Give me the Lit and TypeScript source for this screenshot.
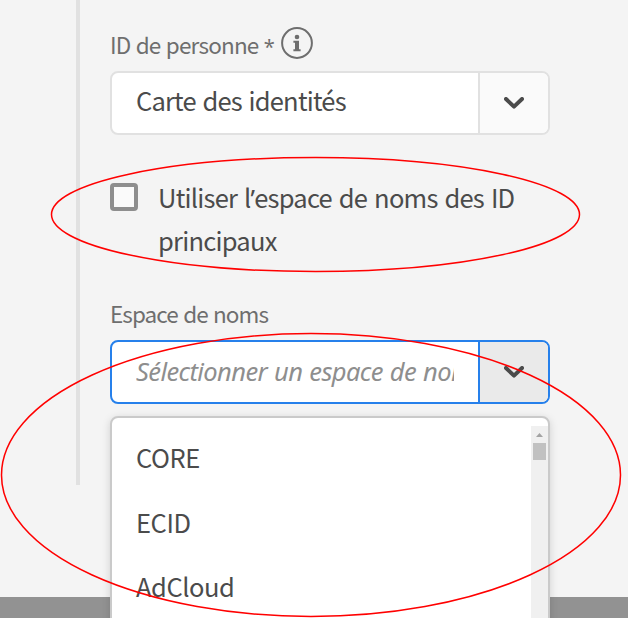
import { LitElement, html, css } from "lit";
import { customElement, property } from "lit/decorators.js";

const namespaces = ["CORE", "ECID", "AdCloud"];

@customElement("select-field")
class SelectField extends LitElement {
  @property() value = "";
  @property() placeholder = "";
  @property({ type: Boolean, reflect: true }) open = false;

  static styles = css`
    :host {
      display: flex;
      box-sizing: border-box;
      width: 440px;
      height: 64px;
      border: 2px solid #e1e1e1;
      border-radius: 8px;
      background: #fff;
      overflow: hidden;
    }
    .field {
      flex: 1;
      min-width: 0;
      padding: 0 24px;
      line-height: 54px;
      font-size: 25.5px;
      letter-spacing: -0.8px;
      word-spacing: 1.7px;
      color: #4b4b4b;
    }
    .text {
      display: block;
      overflow: hidden;
      white-space: nowrap;
    }
    .hint {
      font-family: "Noto Sans", sans-serif;
      font-style: italic;
      line-height: 58px;
      letter-spacing: -0.6px;
      word-spacing: 0.9px;
      color: #8e8e8e;
    }
    .toggle {
      box-sizing: border-box;
      width: 70px;
      border-left: 2px solid #e1e1e1;
      background: #fafafa;
      display: flex;
      align-items: center;
      justify-content: center;
    }
    :host([open]),
    :host([open]) .toggle {
      border-color: #2680eb;
    }
    :host([open]) .toggle {
      background: #eaeaea;
    }
  `;

  render() {
    return html`
      <div class="field">
        ${this.value
          ? html`<span class="text">${this.value}</span>`
          : html`<span class="text hint">${this.placeholder}</span>`}
      </div>
      <div class="toggle">
        <svg width="20" height="12" viewBox="0 0 20 12">
          <path d="M2 2 10 9.6 18 2" fill="none" stroke="#4b4b4b" stroke-width="4" stroke-linecap="round" stroke-linejoin="round" />
        </svg>
      </div>
    `;
  }
}

@customElement("app-root")
class AppRoot extends LitElement {
  static styles = css`
    :host {
      display: block;
      position: relative;
      width: 628px;
      height: 618px;
      overflow: hidden;
      background: #f4f4f4;
      font-family: "Noto Sans CJK SC", "Noto Sans", sans-serif;
      color: #4b4b4b;
    }
    .page {
      display: flex;
      flex-direction: column;
      height: 618px;
    }
    .panel {
      display: flex;
      height: 597px;
      flex: none;
      padding-left: 76px;
    }
    .rule {
      width: 4px;
      height: 485px;
      background: #e1e1e1;
    }
    .footer {
      flex: 1;
      background: #929292;
    }
    .form {
      width: 440px;
      margin-left: 30px;
    }
    .label {
      display: flex;
      font-size: 22.5px;
      line-height: 30px;
      letter-spacing: -0.8px;
      word-spacing: 1px;
      color: #6e6e6e;
      white-space: nowrap;
    }
    .person {
      height: 44px;
      padding-top: 27px;
      justify-content: space-between;
      width: 203px;
    }
    .person .name {
      padding-top: 2px;
    }
    .star {
      font-family: "Noto Sans", sans-serif;
      font-size: 20px;
    }
    .check {
      display: flex;
      height: 122px;
      padding-top: 41px;
    }
    .box {
      box-sizing: border-box;
      width: 28px;
      height: 28px;
      margin-top: 7px;
      border: 4px solid #8e8e8e;
      border-radius: 4px;
      background: #fafafa;
    }
    .caption {
      margin-left: 20px;
      font-size: 25.5px;
      line-height: 42px;
      letter-spacing: -0.76px;
      word-spacing: 1.9px;
      white-space: nowrap;
    }
    .quote {
      font-family: "Noto Sans", sans-serif;
    }
    .space {
      height: 42px;
      box-sizing: border-box;
      letter-spacing: -0.93px;
      word-spacing: 1.2px;
    }
    .menu {
      position: relative;
      box-sizing: border-box;
      display: flex;
      justify-content: space-between;
      width: 440px;
      height: 240px;
      margin-top: 12px;
      border: 2px solid #cacaca;
      border-radius: 8px;
      background: #fff;
      box-shadow: 0 2px 8px rgba(0, 0, 0, 0.15);
    }
    .items {
      padding: 7px 0 0 24px;
    }
    .item {
      font-size: 25.5px;
      line-height: 64px;
      letter-spacing: -0.45px;
      height: 64.5px;
    }
    .scroll {
      display: flex;
      flex-direction: column;
      align-items: center;
      width: 17px;
      margin-top: 8px;
      background: #f0f0f0;
    }
    .up {
      width: 7px;
      height: 4px;
      margin: 7px 0 6px;
      background: #a3a3a3;
      clip-path: polygon(50% 0, 100% 100%, 0 100%);
    }
    .thumb {
      width: 13px;
      height: 17px;
      background: #c1c1c1;
    }
    .marks {
      position: absolute;
      inset: 0;
      pointer-events: none;
    }
  `;

  render() {
    return html`
      <div class="page">
        <div class="panel">
          <div class="rule"></div>
          <div class="form">
            <div class="label person">
              <span class="name">ID de personne <span class="star">*</span></span>
              <svg width="32" height="32" viewBox="0 0 32 32">
                <circle cx="16" cy="16" r="14.9" fill="none" stroke="#6e6e6e" stroke-width="2" />
                <circle cx="16" cy="10" r="2.3" fill="#6e6e6e" />
                <path d="M12.4 13.7H18V22.2H19.6V24.2H12.4V22.2H14V15.7H12.4Z" fill="#6e6e6e" />
              </svg>
            </div>
            <select-field value="Carte des identités"></select-field>
            <div class="check">
              <div class="box"></div>
              <div class="caption">Utiliser l<span class="quote">’</span>espace de noms des ID<br />principaux</div>
            </div>
            <div class="label space">Espace de noms</div>
            <select-field open placeholder="Sélectionner un espace de noms"></select-field>
            <div class="menu">
              <div class="items">${namespaces.map((n) => html`<div class="item">${n}</div>`)}</div>
              <div class="scroll">
                <div class="up"></div>
                <div class="thumb"></div>
              </div>
            </div>
          </div>
        </div>
        <div class="footer"></div>
      </div>
      <svg class="marks" width="628" height="618" viewBox="0 0 628 618" fill="none" stroke="#f00" stroke-width="1.5">
        <ellipse cx="315.5" cy="214.5" rx="264" ry="57" />
        <ellipse cx="311" cy="475" rx="309.5" ry="141.5" />
      </svg>
    `;
  }
}
